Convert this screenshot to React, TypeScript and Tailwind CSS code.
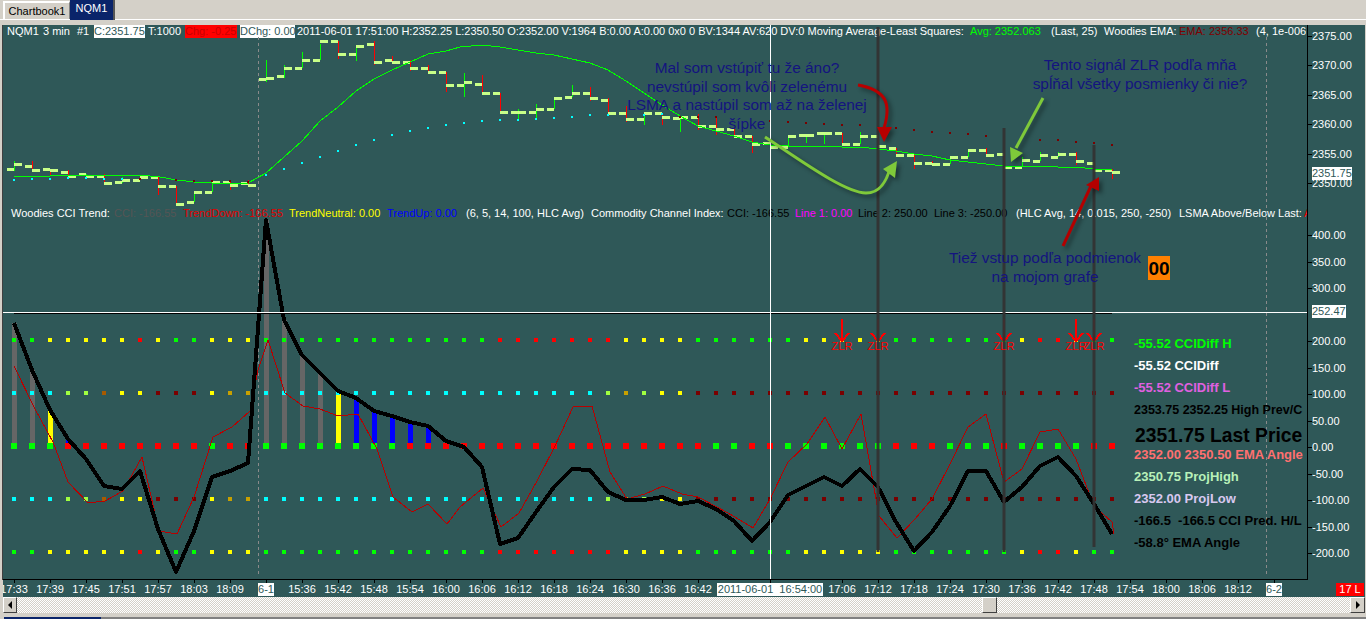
import React from "react";

const xk = (k: number) => 14 + 18 * k;

// open, close, high, low (in 1/3 px), direction
const ohlc: [number, number, number, number, string][] = [
  [508,493,484,512,"g"],[499,511,484,511,"r"],[508,511,508,525,"r"],[517,529,511,529,"r"],[523,529,523,529,"g"],[529,550,521,545,"r"],
  [547,541,532,550,"g"],[541,532,532,541,"r"],[532,559,532,585,"r"],[559,613,559,613,"r"],[607,577,577,607,"g"],[577,547,547,577,"g"],
  [547,556,544,571,"r"],[550,556,541,560,"r"],[238,235,180,245,"g"],[229,205,196,235,"g"],[205,181,156,205,"g"],[181,124,133,181,"g"],
  [124,163,124,178,"r"],[163,139,139,184,"g"],[133,187,124,196,"r"],[181,187,168,190,"r"],[187,205,181,214,"r"],[205,217,196,222,"r"],
  [217,256,217,277,"r"],[256,247,220,290,"g"],[253,280,226,280,"r"],[280,337,280,337,"r"],[337,337,328,364,"g"],[337,328,313,355,"g"],
  [328,295,295,328,"g"],[292,280,255,292,"g"],[280,295,262,304,"r"],[301,340,295,340,"r"],[340,358,319,365,"r"],[358,340,340,376,"g"],
  [340,352,340,376,"r"],[355,352,352,397,"g"],[352,379,343,391,"r"],[379,388,349,406,"r"],[388,409,388,415,"r"],[409,433,409,460,"r"],
  [430,442,430,448,"r"],[442,409,409,442,"g"],[406,406,406,430,"g"],[400,400,400,433,"g"],[400,433,400,439,"r"],[433,409,397,433,"g"],
  [409,439,409,445,"r"],[445,466,445,470,"r"],[466,490,463,508,"r"],[490,493,484,499,"r"],[493,472,472,493,"g"],[472,451,451,472,"g"],
  [451,466,445,466,"r"],[463,502,463,505,"r"],[502,481,472,502,"g"],[484,466,457,484,"g"],[472,463,457,472,"g"],[463,484,457,496,"r"],
  [490,511,490,514,"r"],[511,517,508,538,"r"],
];

const cci = [323,370,410,439,459,486,489,471,529,572,531,477,471,463,220,320,355,373,391,398,411,416,422,426,441,447,467,544,538,512,487,469,470,492,500,500,497,504,501,509,521,541,522,495,486,477,486,469,487,522,551,532,506,471,471,502,487,466,457,476,504,534];

const thin = "14,366 35,409 53,442 68,482 88,503 105,501 123,491 142,457 159,531 177,534 194,497 213,437 232,427 250,411 258,370 268,340 285,393 303,406 320,409 338,416 358,414 377,449 393,497 412,512 428,504 447,524 460,507 483,488 501,527 519,513 537,481 555,446 573,407 592,406 610,472 627,499 645,494 663,486 682,494 698,497 717,507 735,517 753,528 770,499 788,462 807,444 825,417 842,449 861,414 879,516 897,538 915,519 932,499 950,464 968,427 986,414 1004,482 1022,469 1040,432 1058,429 1076,459 1094,506 1112,522 1114,534";

const lsma = "14,177 32,176 50,176 68,175 87,175 104,175 122,175 140,175 160,177 177,180 194,182 212,183 230,183 248,183 266,173 284,157 302,141 320,121 338,107 356,91 374,79 392,70 410,62 428,54 446,51 460,47 482,45 500,47 518,50 536,53 554,55 572,59 590,63 608,70 626,81 644,93 662,105 680,116 698,126 716,131 734,136 752,142 770,145 788,146 806,146 824,146 842,147 860,147 878,149 896,151 914,154 932,156 950,160 968,162 986,164 1004,166 1022,166 1040,166 1058,167 1076,167 1094,169 1112,169";

const cyanDots: [number, number][] = [[14,180],[32,179],[50,179],[68,178],[86,178],[104,179],[122,179],[266,175],[284,169],[302,163],[320,157],[338,151],[356,145],[374,140],[392,135],[410,131],[428,128],[446,125],[464,123],[482,121],[500,120],[518,120],[536,119],[554,118],[572,117],[590,115],[608,115],[644,115],[662,114]];
const maroonDots: [number, number][] = [[140,179],[176,180],[194,181],[212,181],[230,181],[248,182],[680,117],[698,117],[716,117],[770,121],[788,122],[806,123],[824,124],[842,125],[860,125],[896,128],[914,130],[932,132],[950,133],[968,134],[986,136],[1040,140],[1058,140],[1076,142],[1094,143],[1112,145]];

const dotColor: Record<string, string> = { g: "#00ff00", y: "#ffff00", r: "#ff0000", c: "#00ffff", l: "#a0ff40", o: "#a85a00", m: "#7a0000", d: "#c8a000" };
const row200 = "ggyyyyyryggyyyg" + "ggggggggggg" + "g" + "rrrrrrr" + "yyyy" + "gggggg" + "yyyyy" + "gggggg" + "g" + "y" + "rr" + "y" + "gg";
const row100 = "cccllo" + "yy" + "mmm" + "y" + "dd" + "ccccccccccccccccccc" + "l" + "d" + "l" + "yy" + "mmmmmmmmmmmmmmmmmmmmmmmm";
const row0 = "ggg" + "rrrrrrrr" + "g" + "rr" + "gggggggg" + "rrrrrrrrrrrrrrrrr" + "gg" + "rr" + "gggggg" + "rrr" + "ggg" + "r" + "gggg" + "rr";
const barColors = "ggyb" + "gggg" + "y" + "rrrrr" + "gggg" + "y" + "bbbbb" + "nn" + "ggg" + "y" + "rrrrrrrrrrrrrrrrrrrrrrrrrrrrrrrr";
const barFill: Record<string, string> = { g: "#666666", y: "#ffff00", r: "#ff0000", b: "#0000ff" };

const zlr = [842, 878, 1004, 1076, 1094];

const times = ["17:33","17:39","17:45","17:51","17:57","18:03","18:09","6-1","15:36","15:42","15:48","15:54","16:00","16:06","16:12","16:18","16:24","16:30","16:36","16:42","BIG","17:06","17:12","17:18","17:24","17:30","17:36","17:42","17:48","17:54","18:00","18:06","18:12","6-2"];

const priceY = (p: number) => 36 + (2375 - p) * 5.88;
const cciY = (v: number) => 447 - v * 0.53;
const axisTop = [2375, 2370, 2365, 2360, 2355, 2350];
const axisBottom = [400, 350, 300, 200, 150, 100, 50, 0, -50, -100, -150, -200];

function DotRow({ y, s, size }: { y: number; s: string; size: number }) {
  return (
    <>
      {s.split("").map((c, k) => (
        <rect key={k} x={xk(k) - size / 2} y={y - size / 2} width={size} height={size} fill={dotColor[c]} />
      ))}
    </>
  );
}

function Chart() {
  return (
    <svg viewBox="3 25 1304 554" className="absolute inset-0 block h-[554px] w-[1304px]">
      <g shapeRendering="crispEdges">
        <line x1="258.5" y1="37" x2="258.5" y2="575" stroke="#8a8a8a" strokeDasharray="3 3" />
        <line x1="1266.5" y1="37" x2="1266.5" y2="575" stroke="#8a8a8a" strokeDasharray="3 3" />
        {cci.map((v, k) =>
          barColors[k] === "n" ? null : (
            <rect key={k} x={xk(k) - 2} y={v} width={5} height={446 - v} fill={barFill[barColors[k]]} />
          )
        )}
        <DotRow y={340} s={row200} size={4} />
        <DotRow y={393} s={row100} size={4} />
        <DotRow y={446} s={row0} size={6} />
        <DotRow y={499} s={row100} size={4} />
        <DotRow y={552} s={row200} size={4} />
        <polyline points={thin} fill="none" stroke="#b80000" strokeWidth="1" />
        <polyline points={cci.map((v, k) => `${xk(k)},${v}`).join(" ")} fill="none" stroke="#000" strokeWidth="4" strokeLinejoin="round" />
        <line x1="3" y1="312.5" x2="1307" y2="312.5" stroke="#fff" strokeWidth="1" />
        <line x1="14" y1="313.5" x2="1112" y2="313.5" stroke="#000" strokeWidth="1" />
        {ohlc.map(([o, c, hi, lo, d], k) => {
          const x = xk(k);
          const oy = Math.round(o / 3);
          const cy = Math.round(c / 3);
          return (
            <g key={k}>
              <rect x={x} y={hi / 3} width={1} height={(lo - hi) / 3} fill={d === "g" ? "#00ff00" : "#ff0000"} />
              <rect x={x - 7} y={oy - 1} width={7} height={3} fill="#c8ff88" />
              <rect x={x} y={cy - 1} width={8} height={3} fill="#c8ff88" />
            </g>
          );
        })}
        <polyline points={lsma} fill="none" stroke="#00ff00" strokeWidth="1" />
        {cyanDots.map(([x, y], i) => <rect key={i} x={x - 1} y={y - 1} width={2} height={2} fill="#00ffff" />)}
        {maroonDots.map(([x, y], i) => <rect key={i} x={x - 1} y={y - 1} width={2} height={2} fill="#7a0000" />)}
        <line x1="770.5" y1="25" x2="770.5" y2="579" stroke="#fff" strokeWidth="1" />
        {zlr.map((x) => (
          <g key={x} stroke="#ff0000" strokeWidth="2" fill="none">
            <line x1={x} y1="319" x2={x} y2="341" />
            <polyline points={`${x - 7},333 ${x},341 ${x + 7},333`} />
          </g>
        ))}
      </g>
      <g stroke="#333" strokeWidth="3" opacity="0.95">
        <line x1="878" y1="27" x2="878" y2="552" />
        <line x1="1004" y1="128" x2="1004" y2="552" />
        <line x1="1094" y1="145" x2="1094" y2="547" />
      </g>
      <g className="drop-shadow-[3px_3px_2px_rgba(0,0,0,0.4)]">
        <path d="M858 85 C885 90 892 102 884 128" fill="none" stroke="#b80000" strokeWidth="3" />
        <polygon points="877,127 892,127 884,142" fill="#b80000" />
        <path d="M765 137 C800 160 845 193 866 193 C880 193 887 180 890 168" fill="none" stroke="#7fc93a" strokeWidth="3" />
        <polygon points="897,161 883,169 895,178" fill="#7fc93a" />
        <line x1="1043" y1="98" x2="1016" y2="148" stroke="#7fc93a" strokeWidth="3" />
        <polygon points="1010,147 1023,153 1011,162" fill="#7fc93a" />
        <line x1="1063" y1="246" x2="1091" y2="186" stroke="#b30000" strokeWidth="3" />
        <polygon points="1086,185 1099,177 1099,191" fill="#b30000" />
      </g>
    </svg>
  );
}

function Arrow({ dir }: { dir: "l" | "r" }) {
  return (
    <svg viewBox="0 0 6 8" className="h-[8px] w-[6px]">
      <polygon points={dir === "l" ? "5,0 5,8 1,4" : "1,0 1,8 5,4"} fill="#000" />
    </svg>
  );
}

export default function App() {
  return (
    <div className="flex h-[619px] w-[1366px] flex-col overflow-hidden bg-[#d4d0c8] font-['Liberation_Sans',sans-serif] text-[11px] leading-[13px] text-white">
      {/* tabs */}
      <div className="relative z-10 flex h-[19px] shrink-0 items-start pl-[3px] pt-px text-black">
        <div className="flex h-[18px] w-[67px] items-center justify-center border-l-2 border-t-2 border-white border-r border-r-[#808080] text-[11px]">Chartbook1</div>
        <div className="-mt-px flex h-[20px] w-[45px] items-center justify-center border-r-2 border-[#555] bg-[#0a246a] pb-[3px] text-white">NQM1</div>
      </div>
      <div className="h-px shrink-0 bg-white" />
      <div className="h-[5px] shrink-0" />

      {/* chart */}
      <div className="flex h-[555px] shrink-0 pl-[2px] pr-px">
        <div className="w-px shrink-0 bg-[#404040]" />
        <div className="relative w-[1305px] shrink-0 overflow-hidden border-b border-r border-black bg-[#2f5858]">
          {/* legend 1 */}
          <div className="absolute left-[4px] top-0 flex h-[13px] items-center whitespace-pre">
            <span className="w-[36px] shrink-0">NQM1</span>
            <span className="w-[34px] shrink-0">3 min</span>
            <span className="w-[17px] shrink-0">#1</span>
            <span className="w-[51px] shrink-0 bg-white text-[#2f5858]">C:2351.75</span>
            <span className="ml-[3px] w-[37px] shrink-0">T:1000</span>
            <span className="w-[52px] shrink-0 bg-[#ff0000] text-[#c80000]">Chg: -0.25</span>
            <span className="ml-[3px] w-[55px] shrink-0 bg-white text-[#2f5858]">DChg: 0.00</span>
            <span className="ml-[2px] w-[673px] shrink-0">2011-06-01 17:51:00 H:2352.25 L:2350.50 O:2352.00 V:1964 B:0.00 A:0.00 0x0 0 BV:1344 AV:620 DV:0 Moving Average-Least Squares:</span>
            <span className="w-[81px] shrink-0 text-[#00ff00]">Avg: 2352.063</span>
            <span className="w-[53px] shrink-0">(Last, 25)</span>
            <span className="w-[75px] shrink-0">Woodies EMA:</span>
            <span className="w-[77px] shrink-0 text-[#800000]">EMA: 2356.33</span>
            <span className="w-[50px] shrink-0 overflow-hidden">(4, 1e-006</span>
          </div>
          {/* legend 2 */}
          <div className="absolute left-[8px] top-[182px] flex h-[13px] items-center whitespace-pre">
            <span className="w-[103px] shrink-0">Woodies CCI Trend:</span>
            <span className="w-[69px] shrink-0 text-[#555555]">CCI: -166.55</span>
            <span className="w-[106px] shrink-0 text-[#e00000]">TrendDown: -166.55</span>
            <span className="w-[98px] shrink-0 text-[#ffff00]">TrendNeutral: 0.00</span>
            <span className="w-[79px] shrink-0 text-[#0000ff]">TrendUp: 0.00</span>
            <span className="w-[125px] shrink-0">(6, 5, 14, 100, HLC Avg)</span>
            <span className="w-[136px] shrink-0">Commodity Channel Index:</span>
            <span className="w-[68px] shrink-0 text-black">CCI: -166.55</span>
            <span className="w-[63px] shrink-0 text-[#ff00ff]">Line 1: 0.00</span>
            <span className="w-[76px] shrink-0 text-black">Line 2: 250.00</span>
            <span className="w-[82px] shrink-0 text-black">Line 3: -250.00</span>
            <span className="w-[163px] shrink-0">(HLC Avg, 14, 0.015, 250, -250)</span>
            <span className="w-[125px] shrink-0">LSMA Above/Below Last:</span>
            <span className="w-[3px] shrink-0 overflow-hidden text-[#ff0000]">A</span>
          </div>

          <Chart />

          {/* annotations */}
          <div className="absolute left-[604px] top-[34px] w-[280px] text-center text-[15.4px] leading-[18.5px] text-[#14147f]">
            Mal som vstúpiť tu že áno?<br />nevstúpil som kvôli zelenému<br />LSMA a nastúpil som až na želenej<br />šípke
          </div>
          <div className="absolute left-[997px] top-[30px] w-[280px] text-center text-[15.4px] leading-[19px] text-[#14147f]">
            Tento signál ZLR podľa mňa<br />spĺňal všetky posmienky či nie?
          </div>
          <div className="absolute left-[902px] top-[224px] w-[280px] text-center text-[15.4px] leading-[18.5px] text-[#14147f]">
            Tiež vstup podľa podmienok<br />na mojom grafe
          </div>

          {zlr.map((x) => (
            <span key={x} className="absolute top-[315px] -translate-x-1/2 text-[#ff0000]" style={{ left: x - 3 }}>ZLR</span>
          ))}

          <div className="absolute left-[1145px] top-[231px] flex h-[24px] w-[22px] items-center justify-center bg-[#ff8000] text-[19px] font-bold text-black">00</div>

          {/* price info panel */}
          <div className="absolute left-[1131px] top-[307px] flex flex-col whitespace-pre text-[13px] font-bold">
            <div className="flex h-[22px] items-center text-[#00ff00]">-55.52 CCIDiff H</div>
            <div className="flex h-[22px] items-center text-white">-55.52 CCIDiff</div>
            <div className="flex h-[22px] items-center text-[#e060e0]">-55.52 CCIDiff L</div>
            <div className="mt-px flex h-[22px] items-center text-[12.5px] text-black">2353.75 2352.25 High Prev/C</div>
            <div className="ml-px mt-[4px] flex h-[20px] items-center text-[19.3px] text-black">2351.75 Last Price</div>
            <div className="flex h-[18px] items-center text-[#ff7070]">2352.00 2350.50 EMA Angle</div>
            <div className="mt-[2px] flex h-[22px] items-center text-[#b8f0b8]">2350.75 ProjHigh</div>
            <div className="flex h-[22px] items-center text-[#d8c8f0]">2352.00 ProjLow</div>
            <div className="flex h-[22px] items-center text-black">-166.5  -166.5 CCI Pred. H/L</div>
            <div className="flex h-[22px] items-center text-black">-58.8° EMA Angle</div>
          </div>
        </div>

        {/* price axis */}
        <div className="relative w-[57px] shrink-0 bg-[#2f5858]">
          {axisTop.map((p) => (
            <div key={p} className="absolute left-0 flex h-[13px] items-center" style={{ top: Math.round(priceY(p)) - 25 - 6 }}>
              <span className="h-px w-[4px] bg-black" />
              <span>{p.toFixed(2)}</span>
            </div>
          ))}
          {axisBottom.map((v) => (
            <div key={v} className="absolute left-0 flex h-[13px] items-center" style={{ top: Math.round(cciY(v)) - 25 - 6 }}>
              <span className="h-px w-[4px] bg-black" />
              <span>{v.toFixed(2)}</span>
            </div>
          ))}
          <div className="absolute left-[4px] top-[142px] h-[13px] w-[40px] bg-white text-[#2f5858]">2351.75</div>
          <div className="absolute left-[4px] top-[280px] h-[13px] w-[34px] bg-white text-[#2f5858]">252.47</div>
        </div>
      </div>

      {/* time axis */}
      <div className="ml-[3px] mr-px h-[17px] shrink-0 overflow-hidden bg-[#2f5858]">
        <div className="-ml-[7px] flex w-[1369px]">
          {times.map((t) =>
            t === "BIG" ? (
              <div key={t} className="flex w-[108px] shrink-0 flex-col items-center">
                <span className="h-[3px] w-px bg-black" />
                <span className="w-[106px] bg-white text-center whitespace-pre text-[#2f5858]">2011-06-01  16:54:00</span>
              </div>
            ) : (
              <div key={t} className="flex w-[36px] shrink-0 flex-col items-center">
                <span className="h-[3px] w-px bg-black" />
                {t.length === 3 ? (
                  <span className="w-[16px] bg-white text-center text-[#2f5858]">{t}</span>
                ) : (
                  <span>{t}</span>
                )}
              </div>
            )
          )}
          <span className="ml-auto mr-px mt-[3px] h-[13px] w-[28px] bg-[#ff0000] text-center">17 L</span>
        </div>
      </div>

      {/* scrollbar */}
      <div className="ml-[3px] mr-px flex h-[16px] shrink-0 bg-[repeating-conic-gradient(#d4d0c8_0_25%,#ffffff_0_50%)] bg-[length:2px_2px]">
        <div className="flex w-[14px] shrink-0 items-center justify-center border-b border-l border-r border-t border-b-[#404040] border-l-white border-r-[#404040] border-t-white bg-[#d4d0c8]"><Arrow dir="l" /></div>
        <div className="w-[965px] shrink-0" />
        <div className="w-[15px] shrink-0 border-b border-l border-r border-t border-b-[#404040] border-l-white border-r-[#404040] border-t-white bg-[#d4d0c8]" />
        <div className="flex-1" />
        <div className="flex w-[15px] shrink-0 items-center justify-center border-b border-l border-r border-t border-b-[#404040] border-l-white border-r-[#404040] border-t-white bg-[#d4d0c8]"><Arrow dir="r" /></div>
      </div>
      <div className="h-[4px] shrink-0" />
      <div className="flex h-[2px] shrink-0 pl-[4px]">
        <div className="w-[97px] bg-[#0a246a]" />
        <div className="flex-1 bg-[#808080]" />
      </div>
    </div>
  );
}
